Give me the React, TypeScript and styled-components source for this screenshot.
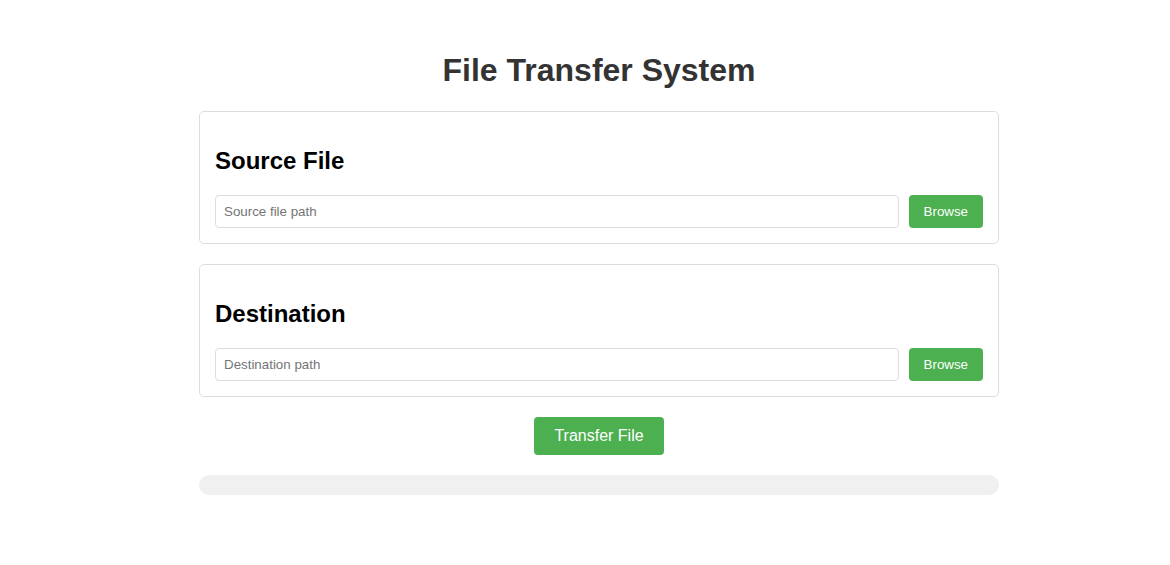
import React from "react";
import styled, { createGlobalStyle } from "styled-components";

const Global = createGlobalStyle`
  html, body { margin: 0; padding: 0; background: #fff; }
  body { font-family: "Liberation Sans", Arial, sans-serif; padding-left: 28px; }
  * { box-sizing: border-box; }
`;

const Container = styled.div`
  max-width: 800px;
  margin: 0 auto;
  padding: 32px 0 20px;
  display: flex;
  flex-direction: column;
`;

const Title = styled.h1`
  margin: 20px 0 22px;
  text-align: center;
  font-size: 32px;
  line-height: 37px;
  font-weight: bold;
  color: #333;
`;

const Section = styled.section`
  border: 1px solid #ddd;
  border-radius: 5px;
  padding: 15px;
  margin-bottom: 20px;
`;

const SectionTitle = styled.h2`
  margin: 20px 0 21px;
  font-size: 24px;
  line-height: 27px;
  font-weight: bold;
  color: #000;
`;

const Row = styled.div`
  display: flex;
  gap: 10px;
`;

const PathInput = styled.input`
  flex: 1;
  height: 33px;
  padding: 8px;
  border: 1px solid #ddd;
  border-radius: 4px;
  font-family: "Liberation Sans", Arial, sans-serif;
  font-size: 13.33px;
  color: #333;
  outline: none;
  &::placeholder { color: #757575; }
`;

const GreenButton = styled.button<{ $big?: boolean }>`
  background: #4caf50;
  color: #fff;
  border: none;
  border-radius: 4px;
  font-family: "Liberation Sans", Arial, sans-serif;
  cursor: pointer;
  font-size: ${(p) => (p.$big ? "16px" : "13.33px")};
  padding: ${(p) => (p.$big ? "10px 20px" : "8px 15px")};
  height: ${(p) => (p.$big ? "38px" : "33px")};
  line-height: 1;
`;

const Center = styled.div`
  display: flex;
  justify-content: center;
`;

const Progress = styled.div`
  margin-top: 20px;
  height: 20px;
  border-radius: 10px;
  background: #f0f0f0;
  overflow: hidden;
`;

const Fill = styled.div`
  height: 100%;
  background: #4caf50;
`;

const PathSection = ({ title, placeholder }: { title: string; placeholder: string }) => (
  <Section>
    <SectionTitle>{title}</SectionTitle>
    <Row>
      <PathInput type="text" placeholder={placeholder} />
      <GreenButton>Browse</GreenButton>
    </Row>
  </Section>
);

export default function App() {
  const progress = 0;
  return (
    <>
      <Global />
      <Container>
        <Title>File Transfer System</Title>
        <PathSection title="Source File" placeholder="Source file path" />
        <PathSection title="Destination" placeholder="Destination path" />
        <Center>
          <GreenButton $big>Transfer File</GreenButton>
        </Center>
        <Progress>
          <Fill style={{ width: `${progress}%` }} />
        </Progress>
      </Container>
    </>
  );
}
